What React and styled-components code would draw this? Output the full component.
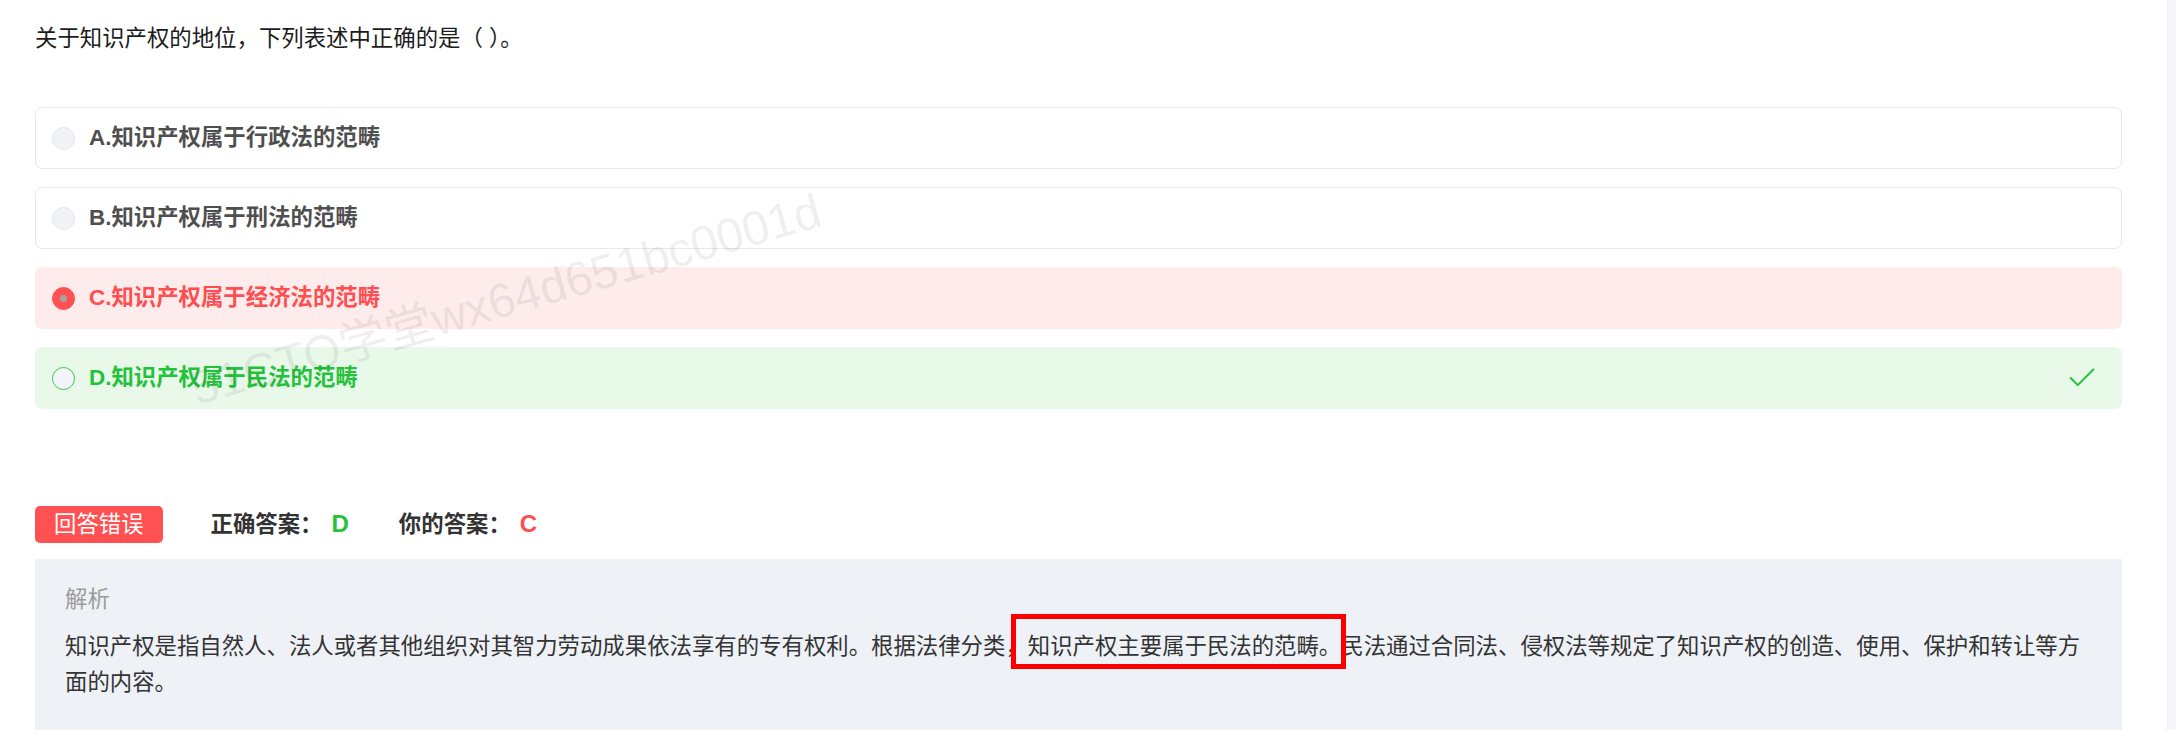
import styled, { createGlobalStyle } from "styled-components";
import { Check } from "lucide-react";

const GlobalStyle = createGlobalStyle`
  html, body {
    margin: 0;
    padding: 0;
    background: #fff;
  }
  body {
    font-family: "Liberation Sans", "Noto Sans CJK SC", sans-serif;
    -webkit-font-smoothing: antialiased;
  }
`;

const options = [
  { key: "A", text: "知识产权属于行政法的范畴", status: "idle" },
  { key: "B", text: "知识产权属于刑法的范畴", status: "idle" },
  { key: "C", text: "知识产权属于经济法的范畴", status: "wrong" },
  { key: "D", text: "知识产权属于民法的范畴", status: "right" },
];

const palette = {
  idle: { bg: "#fff", border: "#e6e8f0", text: "#4f4f4f" },
  wrong: { bg: "#feebeb", border: "transparent", text: "#ff4d50" },
  right: { bg: "#e8f8e9", border: "transparent", text: "#24c13b" },
};

export default function App() {
  return (
    <>
      <GlobalStyle />
      <Page>
        <Main>
          <Question>关于知识产权的地位，下列表述中正确的是（ ）。</Question>

          <OptionList>
            {options.map((o) => (
              <Option key={o.key} $status={o.status}>
                <Radio $status={o.status} />
                <OptionText $status={o.status}>
                  {o.key}.{o.text}
                </OptionText>
                {o.status === "right" && (
                  <Check size={34} strokeWidth={1.4} color="#24c13b" />
                )}
              </Option>
            ))}
          </OptionList>

          <ResultRow>
            <Badge>回答错误</Badge>
            <AnswerLabel>
              正确答案：<AnswerValue $color="#24c13b">D</AnswerValue>
            </AnswerLabel>
            <AnswerLabel>
              你的答案：<AnswerValue $color="#ff4d50">C</AnswerValue>
            </AnswerLabel>
          </ResultRow>

          <Analysis>
            <AnalysisTitle>解析</AnalysisTitle>
            <AnalysisText>
              知识产权是指自然人、法人或者其他组织对其智力劳动成果依法享有的专有权利。根据法律分类，
              <Marked>知识产权主要属于民法的范畴。</Marked>
              民法通过合同法、侵权法等规定了知识产权的创造、使用、保护和转让等方面的内容。
            </AnalysisText>
          </Analysis>

          <Watermark>51CTO学堂wx64d651bc0001d</Watermark>
        </Main>
        <ScrollTrack />
      </Page>
    </>
  );
}

const Page = styled.div`
  display: flex;
  min-height: 730px;
`;

const Main = styled.div`
  position: relative;
  flex: 1;
  padding: 21px 45px 0 35px;
  overflow: hidden;
`;

const ScrollTrack = styled.div`
  width: 8px;
  background: #f5f6f9;
  border-left: 1px solid #eff1f4;
`;

const Question = styled.div`
  font-size: 22.4px;
  line-height: 36px;
  color: #1c1c1c;
  margin-bottom: 50px;
`;

const OptionList = styled.div`
  display: flex;
  flex-direction: column;
  gap: 18px;
`;

const Option = styled.div`
  box-sizing: border-box;
  height: 62px;
  display: flex;
  align-items: center;
  padding: 0 22px 0 16px;
  border-radius: 7px;
  border: 1px solid ${(p) => palette[p.$status].border};
  background: ${(p) => palette[p.$status].bg};
`;

const Radio = styled.span`
  box-sizing: border-box;
  flex: none;
  width: 23px;
  height: 23px;
  border-radius: 50%;
  display: flex;
  align-items: center;
  justify-content: center;
  background: ${(p) =>
    p.$status === "wrong" ? "#ff5052" : p.$status === "right" ? "#f4f5fa" : "#f1f2f6"};
  border: 1px solid
    ${(p) =>
      p.$status === "wrong" ? "#ff5052" : p.$status === "right" ? "#3cc54c" : "#e4e6ed"};

  &::after {
    content: "";
    display: ${(p) => (p.$status === "wrong" ? "block" : "none")};
    width: 7px;
    height: 7px;
    border-radius: 50%;
    background: #a3a3a3;
  }
`;

const OptionText = styled.span`
  flex: 1;
  margin-left: 14px;
  font-size: 22.4px;
  line-height: 36px;
  font-weight: 600;
  color: ${(p) => palette[p.$status].text};
`;

const ResultRow = styled.div`
  display: flex;
  align-items: center;
  margin-top: 97px;
  height: 37px;
`;

const Badge = styled.span`
  height: 37px;
  line-height: 37px;
  padding: 0 19px;
  border-radius: 5px;
  background: #ff5152;
  color: #fff;
  font-size: 22.4px;
`;

const AnswerLabel = styled.span`
  margin-left: 48px;
  font-size: 22.4px;
  line-height: 36px;
  font-weight: 600;
  color: #333;

  & + & {
    margin-left: 50px;
  }
`;

const AnswerValue = styled.span`
  margin-left: 9px;
  font-size: 24px;
  font-weight: 600;
  color: ${(p) => p.$color};
`;

const Analysis = styled.div`
  margin-top: 16px;
  min-height: 200px;
  padding: 23px 30px 40px;
  background: #eef1f6;
`;

const AnalysisTitle = styled.div`
  font-size: 22.4px;
  line-height: 36px;
  color: #9b9b9b;
`;

const AnalysisText = styled.div`
  margin-top: 11px;
  font-size: 22.4px;
  line-height: 36px;
  color: #333;
`;

const Marked = styled.span`
  position: relative;

  &::after {
    content: "";
    position: absolute;
    top: -20px;
    bottom: -10px;
    left: -17px;
    right: -5px;
    border: 5px solid #ff0000;
    pointer-events: none;
  }
`;

const Watermark = styled.div`
  position: absolute;
  left: 506px;
  top: 300px;
  transform: translate(-50%, -50%) rotate(-16deg);
  font-size: 48px;
  line-height: 1;
  white-space: nowrap;
  color: rgba(0, 0, 0, 0.075);
  pointer-events: none;
  user-select: none;
`;
